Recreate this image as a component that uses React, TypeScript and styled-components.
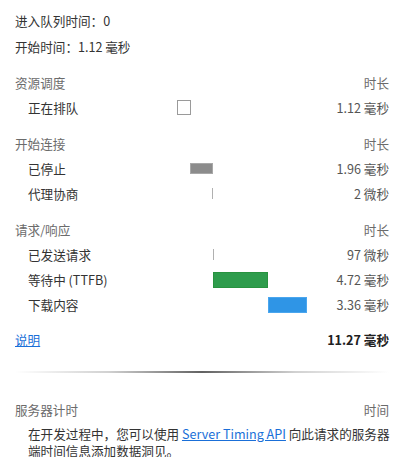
import React from "react";
import styled, { createGlobalStyle } from "styled-components";

const Global = createGlobalStyle`
  html, body { margin: 0; padding: 0; background: #ffffff; }
  body {
    font-family: "Noto Sans CJK SC", "Noto Sans", sans-serif;
    font-size: 12.6px;
    color: #333333;
    -webkit-font-smoothing: antialiased;
  }
`;

const Page = styled.div`
  width: 408px;
  box-sizing: border-box;
  padding: 8px 19px 0 15px;
`;

const InfoLine = styled.div`
  height: 26px;
  line-height: 26px;
  color: #333333;
  white-space: nowrap;
`;

const Section = styled.div<{ $gap?: number }>`
  margin-top: ${(p) => p.$gap ?? 11}px;
`;

const Row = styled.div`
  display: grid;
  grid-template-columns: 162px 131px 1fr;
  align-items: center;
  height: 25px;
  line-height: 25px;
  white-space: nowrap;
`;

const HeaderLabel = styled.div`
  color: #6b6b6b;
`;

const Label = styled.div`
  padding-left: 13px;
  color: #333333;
`;

const Duration = styled.div<{ $bold?: boolean; $muted?: boolean }>`
  text-align: right;
  color: ${(p) => (p.$bold ? "#202020" : p.$muted ? "#6b6b6b" : "#555555")};
  font-weight: ${(p) => (p.$bold ? 700 : 400)};
`;

const Track = styled.div`
  display: flex;
  align-items: center;
  height: 25px;
`;

type BarKind = "queue" | "stalled" | "line" | "waiting" | "download";

const Bar = styled.div<{ $kind: BarKind }>`
  box-sizing: border-box;
  flex: none;
  ${(p) => {
    switch (p.$kind) {
      case "queue":
        return `height: 15px; border: 1px solid #9a9a9a; background: #ffffff;`;
      case "stalled":
        return `height: 11px; background: #8c8c8c; border: 1px solid #a8a8a8;`;
      case "line":
        return `height: 11px; background: #b0b0b0;`;
      case "waiting":
        return `height: 16px; background: #2e9c4c; border: 1px solid #28923f;`;
      case "download":
        return `height: 16px; background: #2f95e6; border: 1px solid #4aa6ee;`;
    }
  }}
`;

const Link = styled.a`
  color: #1a6fd8;
  text-decoration: underline;
  cursor: pointer;
`;

const Divider = styled.div`
  height: 2px;
  margin: 19px 0 0 0;
  background: linear-gradient(
    to right,
    rgba(80, 80, 80, 0) 0%,
    rgba(140, 140, 140, 0.4) 25%,
    rgba(70, 70, 70, 0.85) 50%,
    rgba(140, 140, 140, 0.4) 75%,
    rgba(80, 80, 80, 0) 100%
  );
`;

const ServerHeader = styled.div`
  display: flex;
  justify-content: space-between;
  height: 25px;
  line-height: 25px;
  margin-top: 24px;
  color: #6b6b6b;
`;

const Paragraph = styled.p`
  margin: 3px -10px 0 0;
  padding-left: 13px;
  line-height: 17px;
  color: #333333;
`;

const PX_PER_MS = 11.62;

type Phase = { label: string; start: number; dur: number; kind: BarKind; text: string };

const sections: { title: string; phases: Phase[] }[] = [
  {
    title: "资源调度",
    phases: [{ label: "正在排队", start: 0, dur: 1.12, kind: "queue", text: "1.12 毫秒" }],
  },
  {
    title: "开始连接",
    phases: [
      { label: "已停止", start: 1.12, dur: 1.96, kind: "stalled", text: "1.96 毫秒" },
      { label: "代理协商", start: 3.0, dur: 0.002, kind: "line", text: "2 微秒" },
    ],
  },
  {
    title: "请求/响应",
    phases: [
      { label: "已发送请求", start: 3.08, dur: 0.097, kind: "line", text: "97 微秒" },
      { label: "等待中 (TTFB)", start: 3.1, dur: 4.72, kind: "waiting", text: "4.72 毫秒" },
      { label: "下载内容", start: 7.84, dur: 3.36, kind: "download", text: "3.36 毫秒" },
    ],
  },
];

export default function App() {
  return (
    <Page>
      <Global />
      <InfoLine>进入队列时间：0</InfoLine>
      <InfoLine>开始时间：1.12 毫秒</InfoLine>
      {sections.map((s, i) => (
        <Section key={s.title} $gap={i === 0 ? 10 : 11}>
          <Row>
            <HeaderLabel>{s.title}</HeaderLabel>
            <div />
            <Duration $muted>时长</Duration>
          </Row>
          {s.phases.map((p) => {
            const left = Math.round(p.start * PX_PER_MS);
            const width = Math.max(1, Math.round(p.dur * PX_PER_MS) + (p.kind === "queue" ? 1 : 0));
            return (
              <Row key={p.label}>
                <Label>{p.label}</Label>
                <Track>
                  <Bar $kind={p.kind} style={{ marginLeft: left, width }} />
                </Track>
                <Duration>{p.text}</Duration>
              </Row>
            );
          })}
        </Section>
      ))}
      <Section $gap={10}>
        <Row>
          <div>
            <Link>说明</Link>
          </div>
          <div />
          <Duration $bold>11.27 毫秒</Duration>
        </Row>
      </Section>
      <Divider />
      <ServerHeader>
        <span>服务器计时</span>
        <span>时间</span>
      </ServerHeader>
      <Paragraph>
        在开发过程中，您可以使用 <Link>Server Timing API</Link> 向此请求的服务器端时间信息添加数据洞见。
      </Paragraph>
    </Page>
  );
}
